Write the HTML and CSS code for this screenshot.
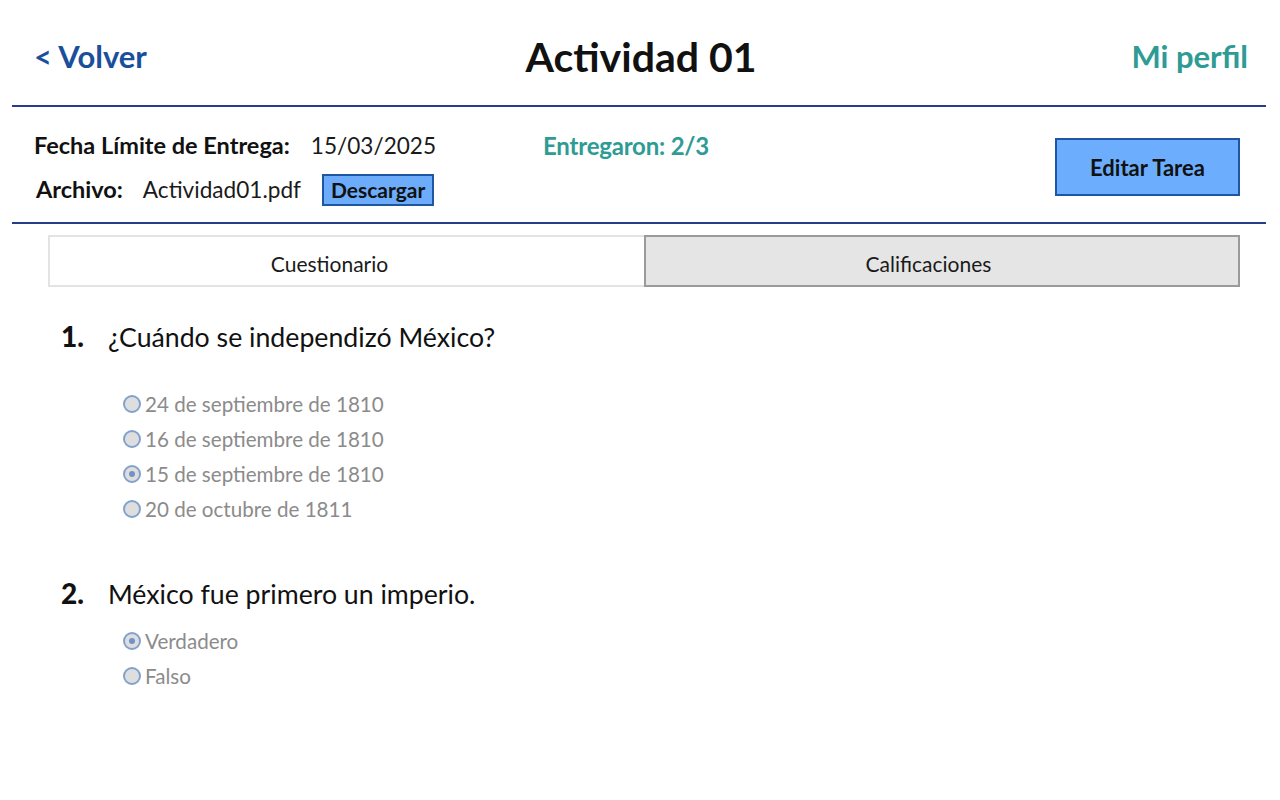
FILE: index.html
```html
<!DOCTYPE html>
<html lang="es">
<head>
<meta charset="utf-8">
<title>Actividad 01</title>
<link rel="stylesheet" href="styles.css">
</head>
<body>
<div class="page">
  <header class="topbar">
    <a class="back" href="#">&lt; Volver</a>
    <h1 class="title">Actividad 01</h1>
    <a class="profile" href="#">Mi perfil</a>
  </header>

  <section class="info">
    <div class="info-left">
      <div class="info-row">
        <span class="label label-fecha">Fecha Límite de Entrega:</span>
        <span class="value">15/03/2025</span>
      </div>
      <div class="info-row">
        <span class="label label-archivo">Archivo:</span>
        <span class="value">Actividad01.pdf</span>
        <button class="btn-download">Descargar</button>
      </div>
    </div>
    <div class="info-mid">Entregaron: 2/3</div>
    <div class="info-right">
      <button class="btn-edit">Editar Tarea</button>
    </div>
  </section>

  <nav class="tabs">
    <div class="tab tab-active">Cuestionario</div>
    <div class="tab tab-inactive">Calificaciones</div>
  </nav>

  <main class="questions">
    <div class="question q1">
      <div class="q-head">
        <span class="q-num">1.</span>
        <span class="q-text">¿Cuándo se independizó México?</span>
      </div>
      <ul class="options">
        <li class="option"><span class="radio"></span>24 de septiembre de 1810</li>
        <li class="option"><span class="radio"></span>16 de septiembre de 1810</li>
        <li class="option"><span class="radio radio-checked"></span>15 de septiembre de 1810</li>
        <li class="option"><span class="radio"></span>20 de octubre de 1811</li>
      </ul>
    </div>
    <div class="question q2">
      <div class="q-head">
        <span class="q-num">2.</span>
        <span class="q-text">México fue primero un imperio.</span>
      </div>
      <ul class="options">
        <li class="option"><span class="radio radio-checked"></span>Verdadero</li>
        <li class="option"><span class="radio"></span>Falso</li>
      </ul>
    </div>
  </main>
</div>
</body>
</html>
```

FILE: styles.css
```css
* { box-sizing: border-box; }

html, body {
  margin: 0;
  padding: 0;
  background: #ffffff;
  font-family: Lato, "Open Sans", "Liberation Sans", sans-serif;
  color: #111111;
}

.page {
  padding: 0 14px 0 12px;
}

.topbar {
  height: 107px;
  border-bottom: 2px solid #263d8c;
  display: flex;
  align-items: center;
  justify-content: space-between;
  padding: 7px 18px 0 22px;
}

.back {
  font-size: 31px;
  font-weight: 700;
  color: #1a4f9b;
  text-decoration: none;
  width: 200px;
}

.title {
  margin: 0;
  font-size: 41px;
  font-weight: 700;
  color: #111111;
}

.profile {
  font-size: 31px;
  font-weight: 700;
  color: #2e9b95;
  text-decoration: none;
  width: 200px;
  text-align: right;
}

.info {
  height: 117px;
  border-bottom: 2px solid #263d8c;
  display: flex;
  align-items: flex-start;
  padding: 22px 26px 0 22px;
}

.info-left {
  display: flex;
  flex-direction: column;
  gap: 12px;
  width: 509px;
}

.info-row {
  display: flex;
  align-items: center;
  height: 32px;
}

.label {
  font-size: 23.5px;
  font-weight: 700;
  color: #111;
}

.label-fecha { margin-right: 21px; }
.label-archivo { margin-left: 2px; margin-right: 20px; }

.value {
  font-size: 22.6px;
  color: #1a1a1a;
}

.btn-download {
  margin-left: 21px;
  font-family: inherit;
  font-size: 21px;
  font-weight: 700;
  color: #111;
  background: #6cacfa;
  border: 2px solid #1e56a3;
  padding: 0 7px;
  height: 32px;
  line-height: 28px;
  margin-top: 2px;
}

.info-mid {
  flex: 1;
  font-size: 24px;
  font-weight: 700;
  color: #2e9b95;
  letter-spacing: -0.2px;
  padding-top: 2px;
}

.info-right {
  padding-top: 9px;
}

.btn-edit {
  width: 185px;
  height: 58px;
  font-family: inherit;
  font-size: 22px;
  font-weight: 700;
  color: #111;
  background: #6caefd;
  border: 2px solid #1e56a3;
}

.tabs {
  display: flex;
  margin: 11px 26px 0 36px;
}

.tab {
  flex: 0 0 50%;
  height: 52px;
  display: flex;
  align-items: center;
  justify-content: center;
  font-size: 21px;
  color: #1a1a1a;
  padding: 4px 35px 0 0;
}

.tab-active {
  background: #ffffff;
  border: 2px solid #e3e3e3;
  border-right: none;
}

.tab-inactive {
  background: #e5e5e5;
  border: 2px solid #9a9a9a;
  padding-right: 27px;
}

.questions {
  padding: 32px 0 0 49px;
}

.q-head {
  display: flex;
  align-items: baseline;
}

.q-num {
  font-size: 28px;
  font-weight: 900;
  width: 47px;
}

.q-text {
  font-size: 26.7px;
  color: #111;
}

.options {
  list-style: none;
  margin: 0;
  padding: 0 0 0 62px;
}

.q1 .options { margin-top: 33px; }
.q2 { margin-top: 50px; }
.q2 .options { margin-top: 13px; }

.option {
  display: flex;
  align-items: center;
  height: 35px;
  font-size: 20.6px;
  color: #8b8b8b;
}

.radio {
  width: 18px;
  height: 18px;
  border-radius: 50%;
  border: 2px solid #82a2cd;
  background: #dedede;
  margin-right: 4px;
  position: relative;
  flex-shrink: 0;
}

.radio-checked::after {
  content: "";
  position: absolute;
  left: 50%;
  top: 50%;
  width: 6px;
  height: 6px;
  margin: -3px 0 0 -3px;
  border-radius: 50%;
  background: #7393c4;
}
```
